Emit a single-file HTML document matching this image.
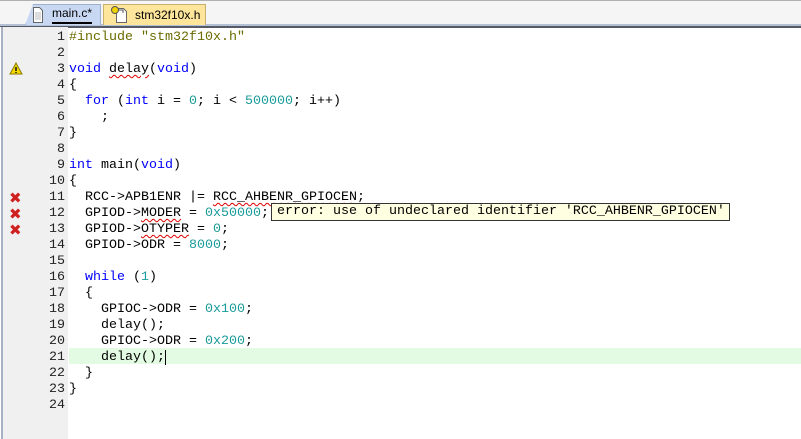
<!DOCTYPE html>
<html><head><meta charset="utf-8"><style>
*{margin:0;padding:0;box-sizing:border-box}
body{width:801px;height:439px;overflow:hidden;background:#fff;position:relative;font-family:"Liberation Mono",monospace}
#tabs{position:absolute;left:0;top:0;width:801px;height:27px;background:#f5f5f5;border-top:1px solid #b0b0b0}
#tabs .band{position:absolute;left:0;top:23px;width:801px;height:2px;background:#b4c0d4}
#tabs .dark{position:absolute;left:0;top:25px;width:801px;height:2px;background:#555a66}
.tab{position:absolute;top:3px;height:21px;font-family:"Liberation Sans",sans-serif;font-size:12px;line-height:20px}
#t1{left:25px;width:76px;background:#c9d8f2;border:1px solid #9fb0cc;border-bottom:none;clip-path:polygon(8px 0,100% 0,100% 100%,0 100%)}
#t2{left:103px;width:103px;background:#fde69c;border:1px solid #c8b070;border-bottom:none}
#gutter{position:absolute;left:0;top:27px;width:68px;height:412px;background:#f0f0f0;border-left:3px solid #a8b0c4}
#gutter::before{content:"";position:absolute;left:-3px;top:0;width:1px;height:100%;background:#fff}
.code{position:absolute;left:69px;font-size:13.33px;line-height:16px;white-space:pre;color:#000}
.k{color:#0000ff}.n{color:#1a9a9a}.p{color:#6b6b00}
.sq{text-decoration:underline wavy #e00000;text-decoration-thickness:1px;text-underline-offset:2px}
.x{position:absolute;left:9px;color:#d02020;font-family:"DejaVu Sans",sans-serif;font-weight:bold;font-size:15px;line-height:16px}
#hl{position:absolute;left:69px;top:348px;width:732px;height:16px;background:#e2fbe2}
#tip{position:absolute;left:271px;top:203px;width:459px;height:18px;background:#ffffe1;border:1px solid #333;font-size:13.33px;line-height:16px;padding-left:5px;white-space:pre}
</style></head><body>
<div id="tabs"><div class="band"></div><div class="dark"></div>
<div class="tab" id="t1"><svg style="position:absolute;left:6px;top:2px" width="12" height="16"><path d="M1.5 .5h6l3 3v12h-9z" fill="#fff" stroke="#666"/><path d="M3 6h6M3 8h6M3 10h6M3 12h6" stroke="#bbb"/></svg><span style="position:absolute;left:26px;top:0;border-bottom:2px solid #000;line-height:17px">main.c*</span></div>
<div class="tab" id="t2"><svg style="position:absolute;left:6px;top:0" width="20" height="18"><path d="M6.5 3.5h7l3 3v11h-10z" fill="#fff" stroke="#666"/><circle cx="5" cy="5" r="3.5" fill="#f0d000" stroke="#555"/><path d="M8 5h5v3" stroke="#555" fill="none"/></svg><span style="position:absolute;left:31px;top:0">stm32f10x.h</span></div>
</div>
<div id="gutter"></div>
<div id="hl"></div>
<svg style="position:absolute;left:9px;top:62px" width="14" height="13"><path d="M7 1L13 12H1z" fill="#f5d800" stroke="#8a7a00"/><path d="M7 5v4M7 10v1" stroke="#000" stroke-width="1.4"/></svg>
<div class="x" style="top:190px">✖</div><div class="x" style="top:206px">✖</div><div class="x" style="top:222px">✖</div>
<div style="position:absolute;left:0;top:30px;width:65px;font-size:13.33px;line-height:16px;text-align:right;color:#222">1<br>2<br>3<br>4<br>5<br>6<br>7<br>8<br>9<br>10<br>11<br>12<br>13<br>14<br>15<br>16<br>17<br>18<br>19<br>20<br>21<br>22<br>23<br>24</div>
<div class="code" style="top:30px"><span class="p">#include</span> <span class="p">"stm32f10x.h"</span>

<span class="k">void</span> <span class="sq">delay</span>(<span class="k">void</span>)
{
  <span class="k">for</span> (<span class="k">int</span> i = <span class="n">0</span>; i &lt; <span class="n">500000</span>; i++)
    ;
}

<span class="k">int</span> main(<span class="k">void</span>)
{
  RCC-&gt;APB1ENR |= <span class="sq">RCC_AHBENR_GPIOCEN</span>;
  GPIOD-&gt;<span class="sq">MODER</span> = <span class="n">0x50000</span>;
  GPIOD-&gt;<span class="sq">OTYPER</span> = <span class="n">0</span>;
  GPIOD-&gt;ODR = <span class="n">8000</span>;

  <span class="k">while</span> (<span class="n">1</span>)
  {
    GPIOC-&gt;ODR = <span class="n">0x100</span>;
    delay();
    GPIOC-&gt;ODR = <span class="n">0x200</span>;
    delay();<span style="border-left:1px solid #000"></span>
  }
}
</div>
<div id="tip">error: use of undeclared identifier 'RCC_AHBENR_GPIOCEN'</div>
</body></html>
